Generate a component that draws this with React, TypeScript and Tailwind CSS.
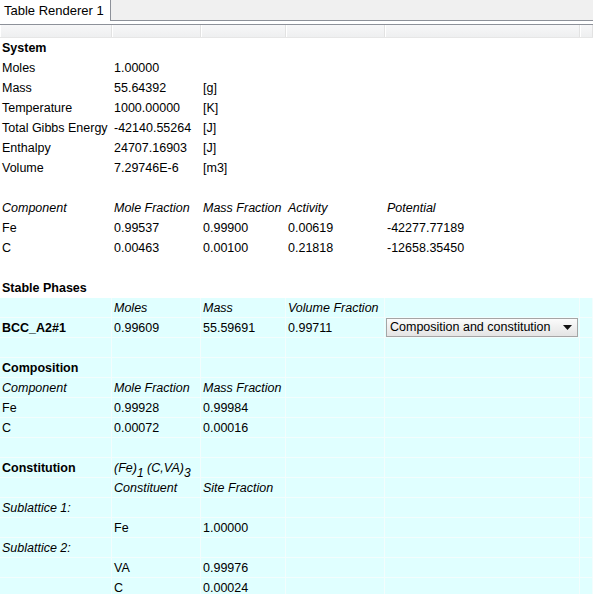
import React from "react";

type Cell = React.ReactNode;
type Row = { cells: Cell[]; style?: "bold" | "italic" | "boldFirst" | "italicFirst" | "none"; cyan?: boolean };

const widths = ["w-[112px]", "w-[89px]", "w-[85px]", "w-[99px]", "w-[195px]", "flex-1"];

const rows: Row[] = [
  { cells: ["System"], style: "bold" },
  { cells: ["Moles", "1.00000"] },
  { cells: ["Mass", "55.64392", "[g]"] },
  { cells: ["Temperature", "1000.00000", "[K]"] },
  { cells: ["Total Gibbs Energy", "-42140.55264", "[J]"] },
  { cells: ["Enthalpy", "24707.16903", "[J]"] },
  { cells: ["Volume", "7.29746E-6", "[m3]"] },
  { cells: [] },
  { cells: ["Component", "Mole Fraction", "Mass Fraction", "Activity", "Potential"], style: "italic" },
  { cells: ["Fe", "0.99537", "0.99900", "0.00619", "-42277.77189"] },
  { cells: ["C", "0.00463", "0.00100", "0.21818", "-12658.35450"] },
  { cells: [] },
  { cells: ["Stable Phases"], style: "bold" },
  { cells: ["", "Moles", "Mass", "Volume Fraction"], style: "italic", cyan: true },
  { cells: ["BCC_A2#1", "0.99609", "55.59691", "0.99711", "__dropdown"], style: "boldFirst", cyan: true },
  { cells: [], cyan: true },
  { cells: ["Composition"], style: "bold", cyan: true },
  { cells: ["Component", "Mole Fraction", "Mass Fraction"], style: "italic", cyan: true },
  { cells: ["Fe", "0.99928", "0.99984"], cyan: true },
  { cells: ["C", "0.00072", "0.00016"], cyan: true },
  { cells: [], cyan: true },
  { cells: ["Constitution", "__formula"], style: "boldFirst", cyan: true },
  { cells: ["", "Constituent", "Site Fraction"], style: "italic", cyan: true },
  { cells: ["Sublattice 1:"], style: "italic", cyan: true },
  { cells: ["", "Fe", "1.00000"], cyan: true },
  { cells: ["Sublattice 2:"], style: "italic", cyan: true },
  { cells: ["", "VA", "0.99976"], cyan: true },
  { cells: ["", "C", "0.00024"], cyan: true },
];

function Dropdown() {
  return (
    <div className="mx-[1px] flex h-[19px] items-center justify-between border border-[#a5a5a5] bg-gradient-to-b from-[#fbfbfb] to-[#e4e4e4] pl-[3px] pr-[5px] text-[12.5px]">
      <span>Composition and constitution</span>
      <svg width="9" height="5" viewBox="0 0 9 5">
        <path d="M0 0 L9 0 L4.5 5 Z" fill="#111" />
      </svg>
    </div>
  );
}

function Formula() {
  return (
    <span className="italic">
      (Fe)<sub className="relative top-[1px] text-[12px] align-[-4px]">1</sub> (C,VA)<sub className="relative top-[1px] text-[12px] align-[-4px]">3</sub>
    </span>
  );
}

export default function App() {
  return (
    <div className="h-[594px] w-[593px] overflow-hidden bg-white text-[12.5px] text-black" style={{ fontFamily: '"Liberation Sans", Arial, sans-serif' }}>
      <div className="flex h-[21px]">
        <div className="flex w-[111px] items-center border-r border-[#8d9199] bg-white pl-[4px] text-[13px]">Table Renderer 1</div>
        <div className="flex-1 border-b border-[#8d9199] bg-[#f0f0f0]" />
      </div>
      <div className="h-[3px]" />
      <div className="flex h-[14px] border-t border-b border-[#8d9199] border-b-[#e6e6e6]">
        {widths.map((w, i) => (
          <div key={i} className={`${w} border-r border-r-[#e2e2e2] border-l border-l-white bg-gradient-to-b from-[#f7f7f8] to-[#eeeff0]`} />
        ))}
      </div>
      {rows.map((r, ri) => (
        <div key={ri} className={`flex h-[20px] border-b ${r.cyan ? "border-[#f3fdfd] bg-[#e0ffff]" : "border-white bg-white"}`}>
          {widths.map((w, ci) => {
            const c = r.cells[ci];
            let cls = "";
            if (r.style === "bold") cls = "font-bold";
            if (r.style === "italic") cls = "italic";
            if (r.style === "boldFirst" && ci === 0) cls = "font-bold";
            let content: React.ReactNode = c;
            if (c === "__dropdown") content = <Dropdown />;
            if (c === "__formula") content = <Formula />;
            return (
              <div
                key={ci}
                className={`${w} flex items-center whitespace-nowrap border-r ${r.cyan ? "border-[#f3fdfd]" : "border-white"} ${c === "__dropdown" ? "" : "pl-[2px] pt-[2px]"} ${cls}`}
              >
                {c === "__dropdown" ? <div className="w-full">{content}</div> : content}
              </div>
            );
          })}
        </div>
      ))}
    </div>
  );
}
